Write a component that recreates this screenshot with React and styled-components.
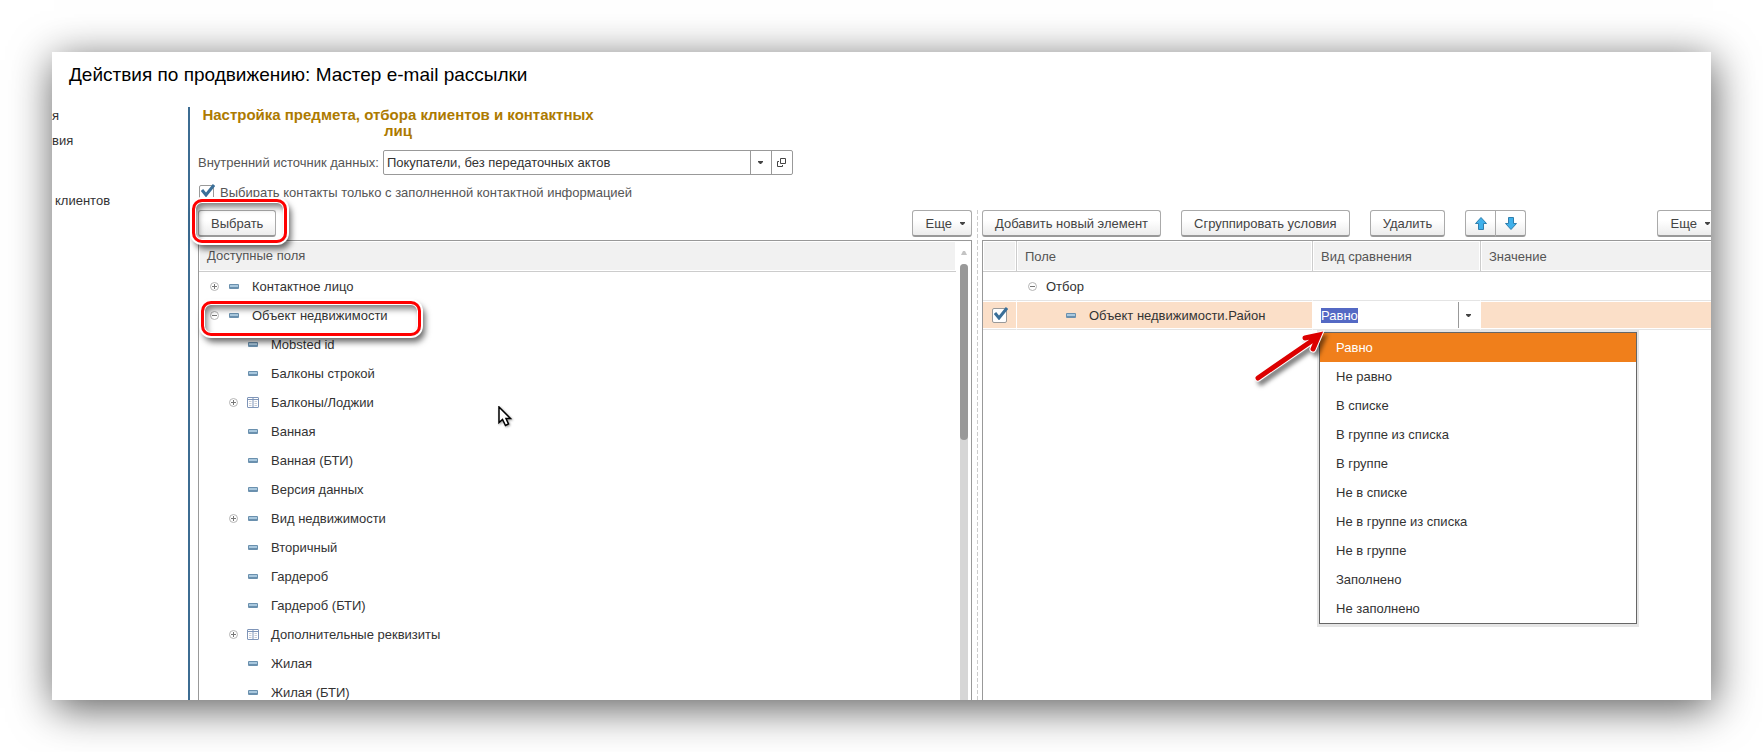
import { useEffect, useRef, useState } from 'react';
import styled, { createGlobalStyle, css } from 'styled-components';

const fields = [
    { name: 'Контактное лицо', level: 0, toggle: 'plus' },
    { name: 'Объект недвижимости', level: 0, toggle: 'minus', marked: true },
    { name: 'Mobsted id', level: 1 },
    { name: 'Балконы строкой', level: 1 },
    { name: 'Балконы/Лоджии', level: 1, toggle: 'plus', table: true },
    { name: 'Ванная', level: 1 },
    { name: 'Ванная (БТИ)', level: 1 },
    { name: 'Версия данных', level: 1 },
    { name: 'Вид недвижимости', level: 1, toggle: 'plus' },
    { name: 'Вторичный', level: 1 },
    { name: 'Гардероб', level: 1 },
    { name: 'Гардероб (БТИ)', level: 1 },
    { name: 'Дополнительные реквизиты', level: 1, toggle: 'plus', table: true },
    { name: 'Жилая', level: 1 },
    { name: 'Жилая (БТИ)', level: 1 },
];

const comparisons = [
    'Равно',
    'Не равно',
    'В списке',
    'В группе из списка',
    'В группе',
    'Не в списке',
    'Не в группе из списка',
    'Не в группе',
    'Заполнено',
    'Не заполнено',
];

function Caret({ up }) {
    if (up) {
        return (
            <svg width="6" height="4" viewBox="0 0 6 4" aria-hidden="true">
                <path d="M0 4 L2 0 H4 L6 4Z" fill="#c4c4c4" />
            </svg>
        );
    }

    return (
        <svg width="5" height="3" viewBox="0 0 5 3" aria-hidden="true">
            <path d="M0 0H5V1L3 3H2L0 1Z" fill="#444" />
        </svg>
    );
}

function OpenIcon() {
    return (
        <svg width="9" height="9" viewBox="0 0 9 9" fill="none" stroke="#444" aria-hidden="true">
            <path d="M3.5 0.5H8.5V5.5H3.5Z" />
            <path d="M2 3.5H0.5V8.5H5.5V7" />
        </svg>
    );
}

function ToggleIcon({ type }) {
    return (
        <svg width="9" height="9" viewBox="0 0 9 9" fill="none" aria-hidden="true">
            <circle cx="4.5" cy="4.5" r="4" stroke="#b4b4b4" />
            <path d={type === 'plus' ? 'M2 4.5H7M4.5 2V7' : 'M2 4.5H7'} stroke="#777" />
        </svg>
    );
}

function DashIcon() {
    return (
        <svg width="10" height="5" viewBox="0 0 10 5" aria-hidden="true">
            <rect width="10" height="5" rx="1" fill="#6a90ae" />
            <rect x="1" y="1" width="8" height="2" fill="#a9c8de" />
        </svg>
    );
}

function TableIcon() {
    return (
        <svg width="12" height="11" viewBox="0 0 12 11" fill="none" aria-hidden="true">
            <rect x="0.5" y="0.5" width="11" height="10" rx="0.5" fill="#fff" stroke="#7f95b8" />
            <path d="M0.5 2.5H11.5M6 0V11" stroke="#7f95b8" />
            <path d="M2 4.5H4.5M2 6.5H4.5M2 8.5H4.5M7.5 4.5H10M7.5 6.5H10M7.5 8.5H10" stroke="#c9cdd6" />
        </svg>
    );
}

function MoveIcon({ down }) {
    return (
        <svg width="12" height="13" viewBox="0 0 12 13" aria-hidden="true">
            <path
                d={down ? 'M3.5 0.5H8.5V6.5H11.5L6 12.5L0.5 6.5H3.5Z' : 'M3.5 12.5H8.5V6.5H11.5L6 0.5L0.5 6.5H3.5Z'}
                fill="#3fb0ea"
                stroke="#2f7fae"
                strokeLinejoin="round"
            />
        </svg>
    );
}

function Checkbox({ id, label }) {
    const [checked, setChecked] = useState(true);

    return (
        <CheckHolder>
            <CheckInput
                type="checkbox"
                id={id}
                aria-label={label}
                checked={checked}
                onChange={() => setChecked(!checked)}
            />
            {checked && (
                <CheckMark width="14" height="13" viewBox="0 0 14 13" aria-hidden="true">
                    <path d="M1 6 L5 11 L13 1" fill="none" stroke="#3b6f98" strokeWidth="3" />
                </CheckMark>
            )}
        </CheckHolder>
    );
}

function FieldTree() {
    return (
        <TreeBox>
            <TreeMain>
                <TreeHead>Доступные поля</TreeHead>
                <TreeList>
                    {fields.map((field) => (
                        <TreeRow key={field.name} $level={field.level}>
                            <ToggleSlot>
                                {field.toggle && (
                                    <ToggleButton aria-label={field.name}>
                                        <ToggleIcon type={field.toggle} />
                                    </ToggleButton>
                                )}
                            </ToggleSlot>
                            <IconSlot>{field.table ? <TableIcon /> : <DashIcon />}</IconSlot>
                            {field.name}
                            {field.marked && <RowMark />}
                        </TreeRow>
                    ))}
                </TreeList>
                <Pointer width="15" height="22" viewBox="0 0 15 22" aria-hidden="true">
                    <path
                        d="M1 1V16.5L4.5 13.5L7.5 19.5L10.5 18L8 12.5H12.5Z"
                        fill="#fff"
                        stroke="#000"
                        strokeWidth="1.5"
                    />
                </Pointer>
            </TreeMain>
            <Scroll>
                <Caret up />
                <Track>
                    <Thumb />
                </Track>
            </Scroll>
        </TreeBox>
    );
}

function ComparisonPicker() {
    const [value, setValue] = useState(comparisons[0]);
    const inputRef = useRef(null);

    useEffect(() => {
        inputRef.current.focus();
        inputRef.current.select();
    }, []);

    return (
        <Picker>
            <PickerInput
                ref={inputRef}
                role="combobox"
                aria-label="Вид сравнения"
                aria-expanded="true"
                aria-controls="comparisons"
                value={value}
                onChange={(e) => setValue(e.target.value)}
            />
            <PickerButton aria-label="Вид сравнения">
                <Caret />
            </PickerButton>
            <Options id="comparisons" role="listbox">
                {comparisons.map((item) => (
                    <Option
                        key={item}
                        role="option"
                        aria-selected={item === value}
                        $active={item === value}
                        onClick={() => setValue(item)}
                    >
                        {item}
                    </Option>
                ))}
            </Options>
            <RedArrow width="74" height="56" viewBox="0 0 74 56" aria-hidden="true">
                <path
                    d="M6 48 L64 8 M53 8 L67 5 L61 19"
                    fill="none"
                    stroke="#fff"
                    strokeWidth="7"
                    strokeLinecap="round"
                />
                <path
                    d="M6 48 L64 8 M53 8 L67 5 L61 19"
                    fill="none"
                    stroke="#dc0000"
                    strokeWidth="5"
                    strokeLinecap="round"
                />
            </RedArrow>
        </Picker>
    );
}

function FilterTable() {
    return (
        <TableBox>
            <Table>
                <colgroup>
                    <col width="34" />
                    <col width="296" />
                    <col width="168" />
                    <col />
                </colgroup>
                <thead>
                    <tr>
                        <Th aria-label="Использование" />
                        <Th>Поле</Th>
                        <Th>Вид сравнения</Th>
                        <Th>Значение</Th>
                    </tr>
                </thead>
                <tbody>
                    <tr>
                        <Td />
                        <Td>
                            <CellLine $indent={11}>
                                <ToggleSlot>
                                    <ToggleButton aria-label="Отбор">
                                        <ToggleIcon type="minus" />
                                    </ToggleButton>
                                </ToggleSlot>
                                Отбор
                            </CellLine>
                        </Td>
                        <Td />
                        <Td />
                    </tr>
                    <tr>
                        <Td $active>
                            <CellLine $indent={9}>
                                <Checkbox label="Объект недвижимости.Район" />
                            </CellLine>
                        </Td>
                        <Td $active>
                            <CellLine $indent={48}>
                                <IconSlot>
                                    <DashIcon />
                                </IconSlot>
                                Объект недвижимости.Район
                            </CellLine>
                        </Td>
                        <Td>
                            <ComparisonPicker />
                        </Td>
                        <Td $active />
                    </tr>
                </tbody>
            </Table>
        </TableBox>
    );
}

function App() {
    const [source, setSource] = useState('Покупатели, без передаточных актов');

    return (
        <Page>
            <GlobalStyle />
            <Window>
                <Title>Действия по продвижению: Мастер e-mail рассылки</Title>
                <Body>
                    <Steps>
                        <Step>я</Step>
                        <Step>вия</Step>
                        <Step $last>клиентов</Step>
                    </Steps>
                    <Content>
                        <Heading>Настройка предмета, отбора клиентов и контактных лиц</Heading>
                        <SourceRow>
                            <label htmlFor="source">Внутренний источник данных:</label>
                            <SourceField>
                                <SourceInput id="source" value={source} onChange={(e) => setSource(e.target.value)} />
                                <FieldButton aria-label="Выбрать из списка">
                                    <Caret />
                                </FieldButton>
                                <FieldButton aria-label="Открыть">
                                    <OpenIcon />
                                </FieldButton>
                            </SourceField>
                        </SourceRow>
                        <CheckRow>
                            <Checkbox id="onlyFilled" />
                            <label htmlFor="onlyFilled">Выбирать контакты только с заполненной контактной информацией</label>
                        </CheckRow>
                        <Panels>
                            <Panel>
                                <Toolbar>
                                    <MarkedItem>
                                        <Button>Выбрать</Button>
                                        <ButtonMark />
                                    </MarkedItem>
                                    <MoreButton>
                                        Еще <Caret />
                                    </MoreButton>
                                </Toolbar>
                                <FieldTree />
                            </Panel>
                            <Splitter />
                            <Panel>
                                <Toolbar>
                                    <Button>Добавить новый элемент</Button>
                                    <Button>Сгруппировать условия</Button>
                                    <Button>Удалить</Button>
                                    <MoveGroup>
                                        <MoveButton aria-label="Вверх">
                                            <MoveIcon />
                                        </MoveButton>
                                        <MoveButton aria-label="Вниз">
                                            <MoveIcon down />
                                        </MoveButton>
                                    </MoveGroup>
                                    <MoreButton>
                                        Еще <Caret />
                                    </MoreButton>
                                </Toolbar>
                                <FilterTable />
                            </Panel>
                        </Panels>
                    </Content>
                </Body>
            </Window>
        </Page>
    );
}

const GlobalStyle = createGlobalStyle`
    * {
        box-sizing: border-box;
    }

    body {
        margin: 0;
        background: #fff;
    }

    body, button, input {
        font-family: "Liberation Sans", Arial, sans-serif;
        font-size: 13px;
        color: #333;
    }

    svg {
        display: block;
        flex: none;
    }
`;

const Page = styled.div`
    height: 100vh;
    padding: 52px;
    overflow: hidden;
`;

const Window = styled.main`
    display: flex;
    flex-direction: column;
    height: 100%;
    overflow: hidden;
    background: #fff;
    box-shadow: 2px 8px 40px rgba(0, 0, 0, 0.65);
`;

const Title = styled.h1`
    flex: none;
    height: 55px;
    margin: 0;
    padding: 12px 17px;
    font-size: 19px;
    font-weight: normal;
    line-height: 22px;
    color: #000;
`;

const Body = styled.div`
    display: flex;
    flex: 1;
    min-height: 0;
`;

const Steps = styled.ul`
    flex: none;
    width: 136px;
    margin: 0;
    padding: 0;
    list-style: none;
`;

const Step = styled.li`
    height: 18px;
    margin-bottom: 7px;
    line-height: 18px;

    ${({ $last }) => $last && css`
        margin-top: 42px;
        padding-left: 3px;
    `}
`;

/* the form is a little wider than the window, its right edge is cut off */
const Content = styled.section`
    display: flex;
    flex: 1;
    flex-direction: column;
    min-width: 0;
    margin-right: -6px;
    padding-left: 8px;
    border-left: 2px solid #3c6c92;
`;

const Heading = styled.h2`
    flex: none;
    width: 400px;
    margin: 0 0 11px;
    font-size: 15px;
    line-height: 16px;
    text-align: center;
    color: #ad7a00;
`;

const SourceRow = styled.div`
    display: flex;
    flex: none;
    align-items: center;
    gap: 4px;
    color: #555;
`;

const SourceField = styled.div`
    display: flex;
    width: 410px;
    height: 25px;
    border: 1px solid #999;
    border-radius: 2px;
`;

const SourceInput = styled.input`
    flex: 1;
    min-width: 0;
    padding: 0 3px;
    border: 0;
    background: none;
`;

const FieldButton = styled.button`
    display: flex;
    align-items: center;
    justify-content: center;
    width: 21px;
    padding: 0;
    border: 0;
    border-left: 1px solid #999;
    background: none;
`;

const CheckRow = styled.div`
    display: flex;
    flex: none;
    align-items: center;
    gap: 6px;
    height: 16px;
    margin: 9px 0 10px;
    padding-left: 1px;
    color: #555;
`;

const CheckHolder = styled.span`
    position: relative;
    display: block;
    width: 15px;
    height: 15px;
`;

const CheckInput = styled.input`
    display: block;
    width: 15px;
    height: 15px;
    margin: 0;
    appearance: none;
    border: 1px solid #999;
    border-radius: 2px;
    background: #fff;
`;

const CheckMark = styled.svg`
    position: absolute;
    top: -1px;
    left: 2px;
    pointer-events: none;
`;

const Panels = styled.div`
    display: grid;
    flex: 1;
    grid-template-columns: minmax(0, 774fr) 10px minmax(0, 735fr);
    min-height: 0;
`;

const Panel = styled.div`
    display: flex;
    flex-direction: column;
    min-height: 0;
`;

const Splitter = styled.div`
    justify-self: center;
    width: 1px;
    background: repeating-linear-gradient(#ccc 0 4px, transparent 4px 6px);
`;

const Toolbar = styled.div`
    display: flex;
    flex: none;
    gap: 20px;
    margin-bottom: 3px;
`;

const Button = styled.button`
    height: 27px;
    padding: 0 12px;
    border: 1px solid #aaa;
    border-bottom: 2px solid #999;
    border-radius: 3px;
    background: linear-gradient(#fff 40%, #ececec);
    color: #444;
    white-space: nowrap;
`;

const MoreButton = styled(Button)`
    display: flex;
    align-items: center;
    gap: 8px;
    margin-left: auto;
    padding: 0 6px 0 13px;
`;

const MoveGroup = styled.div`
    display: flex;
`;

const MoveButton = styled(Button)`
    display: flex;
    align-items: center;
    justify-content: center;
    width: 31px;
    padding: 0;

    &:first-child {
        border-radius: 3px 0 0 3px;
    }

    &:last-child {
        margin-left: -1px;
        border-radius: 0 3px 3px 0;
    }
`;

const MarkedItem = styled.div`
    position: relative;
`;

const Mark = styled.span`
    position: absolute;
    z-index: 1;
    border: 3px solid #f00;
    border-radius: 10px;
    box-shadow:
        0 0 0 2px #fff,
        inset 0 0 0 1px #fff,
        3px 5px 6px 1px rgba(0, 0, 0, 0.6),
        inset 3px 5px 6px rgba(0, 0, 0, 0.5);
    pointer-events: none;
`;

const ButtonMark = styled(Mark)`
    inset: -11px -11px -6px -6px;
`;

const RowMark = styled(Mark)`
    top: 0;
    left: 2px;
    width: 220px;
    height: 35px;
`;

const TreeBox = styled.div`
    display: flex;
    flex: 1;
    min-height: 0;
    border: 1px solid #999;
    border-bottom: 0;
`;

const TreeMain = styled.div`
    position: relative;
    flex: 1;
    min-width: 0;
`;

const TreeHead = styled.div`
    height: 31px;
    padding: 0 8px;
    border-bottom: 1px solid #ccc;
    background: #f1f1f1;
    box-shadow: inset 0 0 0 1px #fff;
    line-height: 30px;
    color: #555;
`;

const TreeList = styled.ul`
    margin: 0;
    padding: 0;
    list-style: none;
`;

const TreeRow = styled.li`
    position: relative;
    display: flex;
    align-items: center;
    height: 29px;
    padding-left: ${({ $level }) => 11 + $level * 19}px;
`;

const ToggleSlot = styled.span`
    width: 18px;
`;

const ToggleButton = styled.button`
    display: block;
    padding: 0;
    border: 0;
    background: none;
`;

const IconSlot = styled.span`
    display: flex;
    justify-content: center;
    width: 12px;
    margin-right: 12px;
`;

const Pointer = styled.svg`
    position: absolute;
    top: 165px;
    left: 299px;
    filter: drop-shadow(1px 1px 1px rgba(0, 0, 0, 0.4));
`;

const Scroll = styled.div`
    display: flex;
    flex-direction: column;
    align-items: center;
    gap: 9px;
    width: 15px;
    padding-top: 10px;
`;

const Track = styled.div`
    flex: 1;
    width: 8px;
    border-radius: 4px 4px 0 0;
    background: #d6d6d6;
`;

const Thumb = styled.div`
    height: 176px;
    border-radius: 4px;
    background: #999;
`;

const TableBox = styled.div`
    flex: 1;
    min-height: 0;
    border: 1px solid #999;
    border-bottom: 0;
`;

const Table = styled.table`
    width: 100%;
    table-layout: fixed;
    border-collapse: separate;
    border-spacing: 0;
`;

const Th = styled.th`
    height: 31px;
    padding: 0 8px;
    border-right: 1px solid #ccc;
    border-bottom: 1px solid #ccc;
    background: #f1f1f1;
    box-shadow: inset 0 0 0 1px #fff;
    font-weight: normal;
    text-align: left;
    color: #555;
`;

const Td = styled.td`
    height: 29px;
    padding: 0;
    border-right: 1px solid #fff;
    border-bottom: 1px solid #e4e4e4;
    background: ${({ $active }) => ($active ? '#fbdfc8' : '#fff')};
    box-shadow: inset 0 1px #fff, inset 0 -1px #fff;
`;

const CellLine = styled.div`
    display: flex;
    align-items: center;
    padding-left: ${({ $indent }) => $indent}px;
`;

const Picker = styled.div`
    position: relative;
    display: flex;
    height: 26px;
`;

const PickerInput = styled.input`
    flex: 1;
    min-width: 0;
    padding: 0 8px;
    border: 0;
    outline: none;

    &::selection {
        background: #5469c4;
        color: #fff;
    }
`;

const PickerButton = styled.button`
    display: flex;
    align-items: center;
    justify-content: center;
    width: 22px;
    padding: 0 3px 0 0;
    border: 0;
    border-left: 1px solid #999;
    background: none;
`;

const Options = styled.ul`
    position: absolute;
    top: 30px;
    left: 6px;
    width: 318px;
    margin: 0;
    padding: 0;
    border: 1px solid #666;
    background: #fff;
    box-shadow: 0 0 0 2px #e5e5e5, 0 1px 0 2px #e5e5e5;
    list-style: none;
`;

const Option = styled.li`
    height: 29px;
    padding: 0 16px;
    line-height: 29px;
    color: ${({ $active }) => ($active ? '#fff' : '#333')};
    background: ${({ $active }) => ($active ? '#f07f1b' : '#fff')};
`;

const RedArrow = styled.svg`
    position: absolute;
    top: 28px;
    left: -61px;
    overflow: visible;
    filter: drop-shadow(3px 4px 2px rgba(0, 0, 0, 0.5));
`;

export default App;
